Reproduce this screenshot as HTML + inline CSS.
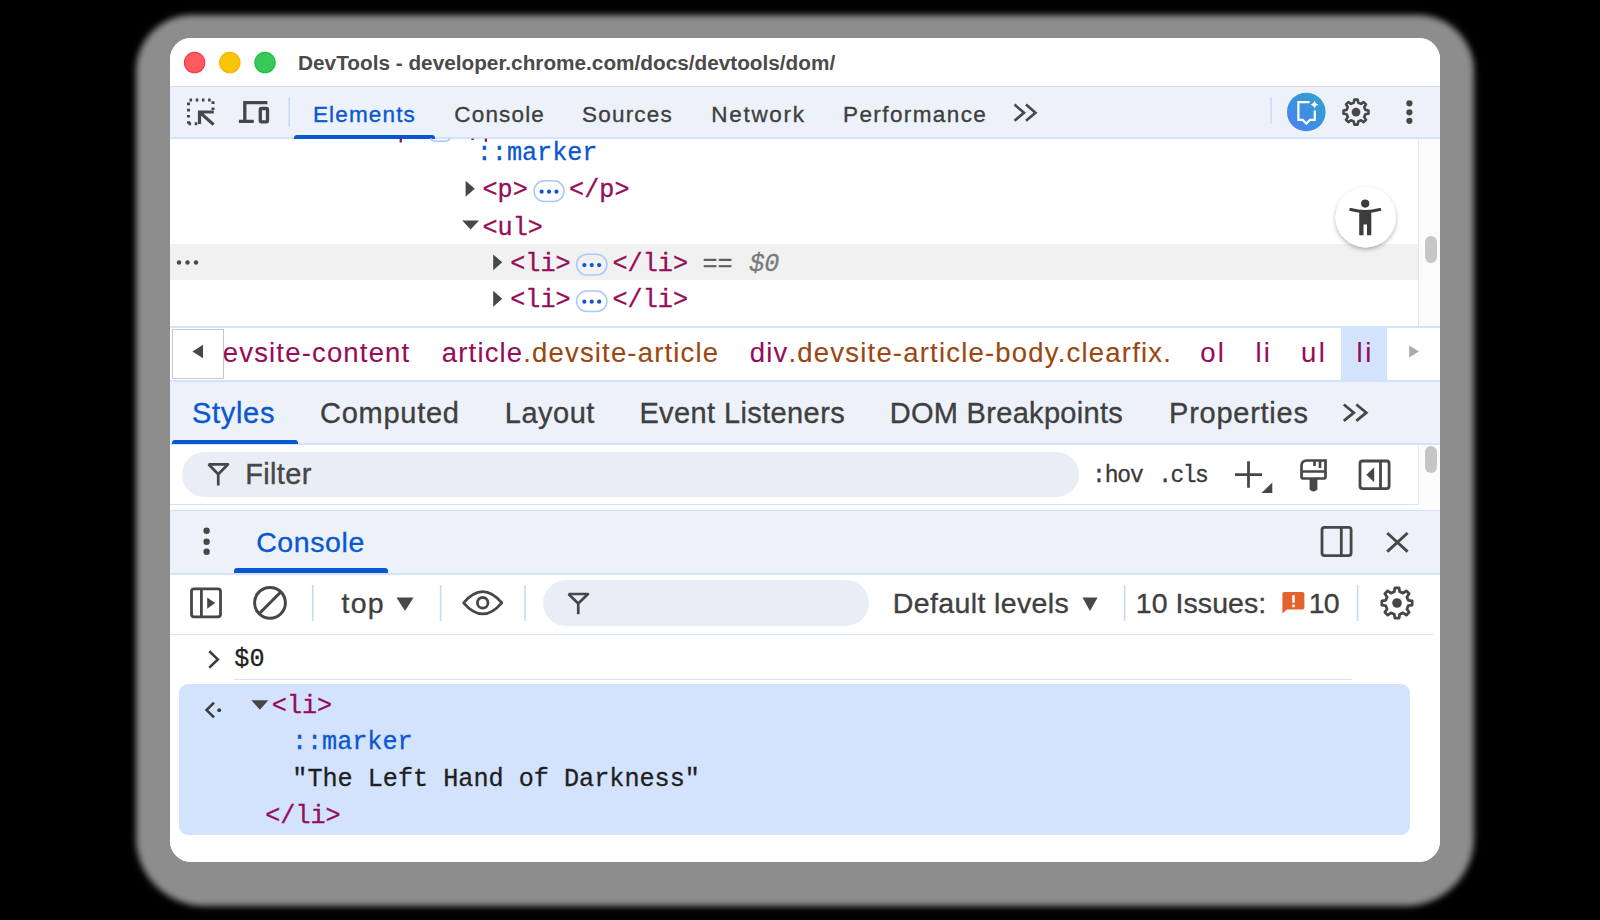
<!DOCTYPE html>
<html><head><meta charset="utf-8"><style>
html,body{margin:0;padding:0;width:1600px;height:920px;overflow:hidden;background:#000}
.t{position:absolute;line-height:0;white-space:pre}
.r{position:absolute}
#shadow{position:absolute;left:136px;top:14.5px;width:1337.5px;height:891px;border-radius:56px 56px 68px 68px;background:#8d8d8d;filter:blur(3px)}
#win{position:absolute;left:170px;top:38px;width:1270px;height:823.5px;border-radius:21px;overflow:hidden;background:#fff}
#ov{position:absolute;left:0;top:0}
</style></head><body>
<div id="shadow"></div>
<div id="win">
<div class="r" style="left:0.00px;top:0.00px;width:1270.00px;height:48.00px;background:#ffffff;"></div>
<div class="r" style="left:0.00px;top:47.50px;width:1270.00px;height:1.00px;background:#dcdcdc;"></div>
<div class="t" style="left:128.10px;top:25.14px;font-family:'Liberation Sans', sans-serif;font-size:20.75px;font-weight:700;font-style:normal;color:#4a4a4a;letter-spacing:0.003px;-webkit-text-stroke:0px;">DevTools - developer.chrome.com/docs/devtools/dom/</div>
<div class="r" style="left:0.00px;top:48.50px;width:1270.00px;height:50.50px;background:#edf2fa;"></div>
<div class="r" style="left:0.00px;top:99.00px;width:1270.00px;height:1.50px;background:#d3e3fd;"></div>
<div class="t" style="left:142.95px;top:76.62px;font-family:'Liberation Sans', sans-serif;font-size:22.5px;font-weight:400;font-style:normal;color:#0b57d0;letter-spacing:1.150px;-webkit-text-stroke:0.35px;">Elements</div>
<div class="t" style="left:284.35px;top:76.72px;font-family:'Liberation Sans', sans-serif;font-size:22.5px;font-weight:400;font-style:normal;color:#3f3f3f;letter-spacing:1.158px;-webkit-text-stroke:0.35px;">Console</div>
<div class="t" style="left:412.00px;top:76.72px;font-family:'Liberation Sans', sans-serif;font-size:22.5px;font-weight:400;font-style:normal;color:#3f3f3f;letter-spacing:1.208px;-webkit-text-stroke:0.35px;">Sources</div>
<div class="t" style="left:541.35px;top:76.72px;font-family:'Liberation Sans', sans-serif;font-size:22.5px;font-weight:400;font-style:normal;color:#3f3f3f;letter-spacing:1.675px;-webkit-text-stroke:0.35px;">Network</div>
<div class="t" style="left:673.05px;top:76.72px;font-family:'Liberation Sans', sans-serif;font-size:22.5px;font-weight:400;font-style:normal;color:#3f3f3f;letter-spacing:1.400px;-webkit-text-stroke:0.35px;">Performance</div>
<div class="r" style="left:124.00px;top:96.50px;width:141.00px;height:4.00px;background:#0b57d0;border-radius:3px 3px 0 0"></div>
<div class="r" style="left:0.00px;top:100.50px;width:1248.00px;height:187.50px;background:#ffffff;"></div>
<div class="r" style="left:0.00px;top:206.00px;width:1248.00px;height:36.00px;background:#f1f1f1;"></div>
<div class="t" style="left:306.70px;top:116.16px;font-family:'Liberation Mono', monospace;font-size:25.17px;font-weight:400;font-style:normal;color:#0b57d0;letter-spacing:0.000px;-webkit-text-stroke:0.3px;">::marker</div>
<div class="t" style="left:312.50px;top:153.16px;font-family:'Liberation Mono', monospace;font-size:25.17px;font-weight:400;font-style:normal;color:#960c58;letter-spacing:0.000px;-webkit-text-stroke:0.3px;">&lt;p&gt;</div>
<div class="t" style="left:399.10px;top:153.16px;font-family:'Liberation Mono', monospace;font-size:25.17px;font-weight:400;font-style:normal;color:#960c58;letter-spacing:0.000px;-webkit-text-stroke:0.3px;">&lt;/p&gt;</div>
<div class="t" style="left:312.50px;top:190.66px;font-family:'Liberation Mono', monospace;font-size:25.17px;font-weight:400;font-style:normal;color:#960c58;letter-spacing:0.000px;-webkit-text-stroke:0.3px;">&lt;ul&gt;</div>
<div class="t" style="left:340.25px;top:227.16px;font-family:'Liberation Mono', monospace;font-size:25.17px;font-weight:400;font-style:normal;color:#960c58;letter-spacing:0.000px;-webkit-text-stroke:0.3px;">&lt;li&gt;</div>
<div class="t" style="left:442.50px;top:227.16px;font-family:'Liberation Mono', monospace;font-size:25.17px;font-weight:400;font-style:normal;color:#960c58;letter-spacing:0.000px;-webkit-text-stroke:0.3px;">&lt;/li&gt;</div>
<div class="t" style="left:532.50px;top:227.16px;font-family:'Liberation Mono', monospace;font-size:25.17px;font-weight:400;font-style:normal;color:#5e5e5e;letter-spacing:0.000px;-webkit-text-stroke:0.3px;">==</div>
<div class="t" style="left:579.25px;top:227.16px;font-family:'Liberation Mono', monospace;font-size:25.17px;font-weight:400;font-style:italic;color:#7a7a7a;letter-spacing:0.000px;-webkit-text-stroke:0.3px;">$0</div>
<div class="t" style="left:340.25px;top:263.46px;font-family:'Liberation Mono', monospace;font-size:25.17px;font-weight:400;font-style:normal;color:#960c58;letter-spacing:0.000px;-webkit-text-stroke:0.3px;">&lt;li&gt;</div>
<div class="t" style="left:442.50px;top:263.46px;font-family:'Liberation Mono', monospace;font-size:25.17px;font-weight:400;font-style:normal;color:#960c58;letter-spacing:0.000px;-webkit-text-stroke:0.3px;">&lt;/li&gt;</div>
<div class="r" style="left:1248.00px;top:100.50px;width:22.00px;height:187.50px;background:#fbfbfb;border-left:1px solid #e6e6e6"></div>
<div class="r" style="left:1255.30px;top:198.20px;width:11.50px;height:26.90px;background:#c6c6c6;border-radius:6px"></div>
<div class="r" style="left:0.00px;top:288.00px;width:1270.00px;height:1.50px;background:#d3e3fd;"></div>
<div class="r" style="left:0.00px;top:289.50px;width:1270.00px;height:52.50px;background:#ffffff;"></div>
<div class="r" style="left:0.00px;top:342.00px;width:1270.00px;height:1.50px;background:#d3e3fd;"></div>
<div class="r" style="left:1170.80px;top:289.50px;width:46.10px;height:52.50px;background:#d3e3fd;"></div>
<div class="t" style="left:52.75px;top:314.88px;font-family:'Liberation Sans', sans-serif;font-size:27.5px;font-weight:400;font-style:normal;color:#960c58;letter-spacing:1.173px;-webkit-text-stroke:0.1px;">evsite-content</div>
<div class="t" style="left:271.85px;top:314.88px;font-family:'Liberation Sans', sans-serif;font-size:27.5px;font-weight:400;font-style:normal;color:#960c58;letter-spacing:1.159px;-webkit-text-stroke:0.1px;">article</div>
<div class="t" style="left:353.32px;top:314.88px;font-family:'Liberation Sans', sans-serif;font-size:27.5px;font-weight:400;font-style:normal;color:#9c4611;letter-spacing:1.159px;-webkit-text-stroke:0.1px;">.devsite-article</div>
<div class="t" style="left:579.75px;top:314.88px;font-family:'Liberation Sans', sans-serif;font-size:27.5px;font-weight:400;font-style:normal;color:#960c58;letter-spacing:1.200px;-webkit-text-stroke:0.1px;">div</div>
<div class="t" style="left:618.50px;top:314.88px;font-family:'Liberation Sans', sans-serif;font-size:27.5px;font-weight:400;font-style:normal;color:#9c4611;letter-spacing:1.200px;-webkit-text-stroke:0.1px;">.devsite-article-body.clearfix.</div>
<div class="t" style="left:1030.35px;top:314.88px;font-family:'Liberation Sans', sans-serif;font-size:27.5px;font-weight:400;font-style:normal;color:#960c58;letter-spacing:2.050px;-webkit-text-stroke:0.1px;">ol</div>
<div class="t" style="left:1085.55px;top:314.88px;font-family:'Liberation Sans', sans-serif;font-size:27.5px;font-weight:400;font-style:normal;color:#960c58;letter-spacing:2.200px;-webkit-text-stroke:0.1px;">li</div>
<div class="t" style="left:1130.95px;top:314.88px;font-family:'Liberation Sans', sans-serif;font-size:27.5px;font-weight:400;font-style:normal;color:#960c58;letter-spacing:2.550px;-webkit-text-stroke:0.1px;">ul</div>
<div class="t" style="left:1186.55px;top:314.88px;font-family:'Liberation Sans', sans-serif;font-size:27.5px;font-weight:400;font-style:normal;color:#960c58;letter-spacing:2.600px;-webkit-text-stroke:0.1px;">li</div>
<div class="r" style="left:1.50px;top:290.50px;width:52.90px;height:50.50px;background:#ffffff;border:1px solid #c9c9c9;box-sizing:border-box"></div>
<div class="r" style="left:1217.80px;top:289.50px;width:52.20px;height:52.50px;background:#ffffff;"></div>
<div class="r" style="left:0.00px;top:343.50px;width:1270.00px;height:61.50px;background:#edf2fa;"></div>
<div class="r" style="left:0.00px;top:405.00px;width:1270.00px;height:1.50px;background:#d3e3fd;"></div>
<div class="t" style="left:21.95px;top:375.15px;font-family:'Liberation Sans', sans-serif;font-size:29px;font-weight:400;font-style:normal;color:#0b57d0;letter-spacing:0.710px;-webkit-text-stroke:0.35px;">Styles</div>
<div class="t" style="left:150.10px;top:375.15px;font-family:'Liberation Sans', sans-serif;font-size:29px;font-weight:400;font-style:normal;color:#3f3f3f;letter-spacing:0.729px;-webkit-text-stroke:0.35px;">Computed</div>
<div class="t" style="left:334.80px;top:375.15px;font-family:'Liberation Sans', sans-serif;font-size:29px;font-weight:400;font-style:normal;color:#3f3f3f;letter-spacing:0.490px;-webkit-text-stroke:0.35px;">Layout</div>
<div class="t" style="left:469.40px;top:375.15px;font-family:'Liberation Sans', sans-serif;font-size:29px;font-weight:400;font-style:normal;color:#3f3f3f;letter-spacing:0.386px;-webkit-text-stroke:0.35px;">Event Listeners</div>
<div class="t" style="left:719.70px;top:375.15px;font-family:'Liberation Sans', sans-serif;font-size:29px;font-weight:400;font-style:normal;color:#3f3f3f;letter-spacing:0.304px;-webkit-text-stroke:0.35px;">DOM Breakpoints</div>
<div class="t" style="left:999.10px;top:375.15px;font-family:'Liberation Sans', sans-serif;font-size:29px;font-weight:400;font-style:normal;color:#3f3f3f;letter-spacing:0.739px;-webkit-text-stroke:0.35px;">Properties</div>
<div class="r" style="left:2.00px;top:401.80px;width:125.50px;height:4.20px;background:#0b57d0;border-radius:3px 3px 0 0"></div>
<div class="r" style="left:0.00px;top:406.50px;width:1248.00px;height:59.50px;background:#ffffff;"></div>
<div class="r" style="left:1248.00px;top:406.50px;width:22.00px;height:65.50px;background:#fbfbfb;border-left:1px solid #e6e6e6"></div>
<div class="r" style="left:1255.40px;top:408.00px;width:11.30px;height:26.50px;background:#c6c6c6;border-radius:6px"></div>
<div class="r" style="left:11.70px;top:413.60px;width:897.80px;height:45.70px;background:#e9eef6;border-radius:23px"></div>
<div class="t" style="left:75.20px;top:436.15px;font-family:'Liberation Sans', sans-serif;font-size:29px;font-weight:400;font-style:normal;color:#474747;letter-spacing:0.360px;-webkit-text-stroke:0.35px;">Filter</div>
<div class="t" style="left:922.00px;top:438.32px;font-family:'Liberation Mono', monospace;font-size:23px;font-weight:400;font-style:normal;color:#3a3a3a;letter-spacing:-1.167px;-webkit-text-stroke:0.3px;">:hov</div>
<div class="t" style="left:988.20px;top:438.32px;font-family:'Liberation Mono', monospace;font-size:23px;font-weight:400;font-style:normal;color:#3a3a3a;letter-spacing:-1.567px;-webkit-text-stroke:0.3px;">.cls</div>
<div class="r" style="left:0.00px;top:465.50px;width:1248.00px;height:1.50px;background:#d3e3fd;"></div>
<div class="r" style="left:0.00px;top:467.00px;width:1270.00px;height:5.00px;background:#ffffff;"></div>
<div class="r" style="left:0.00px;top:471.50px;width:1270.00px;height:1.50px;background:#d3e3fd;"></div>
<div class="r" style="left:0.00px;top:473.00px;width:1270.00px;height:62.00px;background:#edf2fa;"></div>
<div class="r" style="left:0.00px;top:535.00px;width:1270.00px;height:1.50px;background:#d3e3fd;"></div>
<div class="t" style="left:86.20px;top:504.23px;font-family:'Liberation Sans', sans-serif;font-size:28.5px;font-weight:400;font-style:normal;color:#0b57d0;letter-spacing:0.592px;-webkit-text-stroke:0.35px;">Console</div>
<div class="r" style="left:64.00px;top:530.30px;width:153.80px;height:5.20px;background:#0b57d0;border-radius:3px 3px 0 0"></div>
<div class="r" style="left:0.00px;top:536.50px;width:1270.00px;height:59.50px;background:#ffffff;"></div>
<div class="r" style="left:0.00px;top:595.50px;width:1264.00px;height:1.50px;background:#d3e3fd;"></div>
<div class="t" style="left:171.50px;top:565.02px;font-family:'Liberation Sans', sans-serif;font-size:28.5px;font-weight:400;font-style:normal;color:#3f3f3f;letter-spacing:1.250px;-webkit-text-stroke:0.35px;">top</div>
<div class="r" style="left:372.60px;top:541.50px;width:326.10px;height:46.50px;background:#e9eef6;border-radius:23px"></div>
<div class="t" style="left:722.85px;top:565.32px;font-family:'Liberation Sans', sans-serif;font-size:28.5px;font-weight:400;font-style:normal;color:#3f3f3f;letter-spacing:0.365px;-webkit-text-stroke:0.35px;">Default levels</div>
<div class="t" style="left:965.75px;top:565.02px;font-family:'Liberation Sans', sans-serif;font-size:28.5px;font-weight:400;font-style:normal;color:#3f3f3f;letter-spacing:0.067px;-webkit-text-stroke:0.35px;">10 Issues:</div>
<div class="t" style="left:1138.75px;top:565.02px;font-family:'Liberation Sans', sans-serif;font-size:28.5px;font-weight:400;font-style:normal;color:#3f3f3f;letter-spacing:-0.850px;-webkit-text-stroke:0.35px;">10</div>
<div class="r" style="left:0.00px;top:597.00px;width:1270.00px;height:226.00px;background:#ffffff;"></div>
<div class="t" style="left:64.35px;top:622.16px;font-family:'Liberation Mono', monospace;font-size:25.17px;font-weight:400;font-style:normal;color:#1f1f1f;letter-spacing:0.000px;-webkit-text-stroke:0.3px;">$0</div>
<div class="r" style="left:63.80px;top:640.50px;width:1117.90px;height:1.50px;background:#d3e3fd;"></div>
<div class="r" style="left:8.75px;top:645.75px;width:1230.75px;height:150.95px;background:#d3e3fd;border-radius:9px"></div>
<div class="t" style="left:101.80px;top:668.56px;font-family:'Liberation Mono', monospace;font-size:25.17px;font-weight:400;font-style:normal;color:#960c58;letter-spacing:0.000px;-webkit-text-stroke:0.3px;">&lt;li&gt;</div>
<div class="t" style="left:121.90px;top:704.86px;font-family:'Liberation Mono', monospace;font-size:25.17px;font-weight:400;font-style:normal;color:#0b57d0;letter-spacing:0.000px;-webkit-text-stroke:0.3px;">::marker</div>
<div class="t" style="left:122.30px;top:742.41px;font-family:'Liberation Mono', monospace;font-size:25.17px;font-weight:400;font-style:normal;color:#1f1f1f;letter-spacing:0.000px;-webkit-text-stroke:0.3px;">&quot;The Left Hand of Darkness&quot;</div>
<div class="t" style="left:95.20px;top:778.66px;font-family:'Liberation Mono', monospace;font-size:25.17px;font-weight:400;font-style:normal;color:#960c58;letter-spacing:0.000px;-webkit-text-stroke:0.3px;">&lt;/li&gt;</div>
</div>
<svg id="ov" width="1600" height="920" viewBox="0 0 1600 920">
<circle cx="194.6" cy="62.6" r="10.15" fill="#ff5a5f" stroke="#f23a45" stroke-width="1.2"/>
<circle cx="229.8" cy="62.6" r="10.15" fill="#f9c403" stroke="#f3b700" stroke-width="1.2"/>
<circle cx="265.0" cy="62.6" r="10.15" fill="#38c95a" stroke="#18c13a" stroke-width="1.2"/>
<g stroke="#474747" stroke-width="3" fill="none" stroke-linecap="butt"><path d="M188.5 123.8 V100 H213 V111" stroke-dasharray="2.6 3.6"/><path d="M188.5 123.8 H198" stroke-dasharray="2.6 3.6"/><path d="M199.5 124 V112 H213.8 M200.5 113 L213.6 124.6" stroke-width="3.2"/></g>
<g stroke="#474747" stroke-width="3.3" fill="none"><path d="M267.4 102.6 H244.8 V121.4 M238.9 121.4 H253.8"/><rect x="260.3" y="108.5" width="7.2" height="13.3" rx="1.2"/></g>
<line x1="289.2" y1="97.2" x2="289.2" y2="126.9" stroke="#c8d9f7" stroke-width="1.5"/>
<line x1="1271" y1="97.3" x2="1271" y2="123.5" stroke="#c8d9f7" stroke-width="1.5"/>
<path d="M1014.5 104.6 L1024.0 112.65 L1014.5 120.7 M1026.0 104.6 L1035.5 112.65 L1026.0 120.7" stroke="#474747" stroke-width="2.6" fill="none"/>
<path d="M1343.8 404.5 L1353.8 412.65 L1343.8 420.8 M1356.3 404.5 L1366.3 412.65 L1356.3 420.8" stroke="#474747" stroke-width="2.8" fill="none"/>
<defs><linearGradient id="ai" x1="0" y1="1" x2="1" y2="0"><stop offset="0" stop-color="#4a7ff5"/><stop offset="1" stop-color="#2fa3c8"/></linearGradient><filter id="sh" x="-30%" y="-30%" width="160%" height="170%"><feDropShadow dx="0" dy="2" stdDeviation="2.2" flood-color="#000" flood-opacity="0.3"/></filter></defs>
<circle cx="1306.3" cy="112" r="19.3" fill="url(#ai)"/>
<path d="M1309.5 102.2 H1298.4 V119.8 H1302.6 L1306.3 123.6 L1310 119.8 H1314.8 V110.5" stroke="#fff" stroke-width="2.2" fill="none" stroke-linejoin="miter"/>
<path d="M1314.5 100.6 Q1315.2 104.1 1318.6 104.7 Q1315.2 105.3 1314.5 108.8 Q1313.8 105.3 1310.4 104.7 Q1313.8 104.1 1314.5 100.6Z" fill="#fff"/>
<path d="M1365.33 109.86 L1368.49 110.42 L1368.49 113.78 L1365.33 114.34 L1364.19 117.12 L1366.02 119.74 L1363.64 122.12 L1361.02 120.29 L1358.24 121.43 L1357.68 124.59 L1354.32 124.59 L1353.76 121.43 L1350.98 120.29 L1348.36 122.12 L1345.98 119.74 L1347.81 117.12 L1346.67 114.34 L1343.51 113.78 L1343.51 110.42 L1346.67 109.86 L1347.81 107.08 L1345.98 104.46 L1348.36 102.08 L1350.98 103.91 L1353.76 102.77 L1354.32 99.61 L1357.68 99.61 L1358.24 102.77 L1361.02 103.91 L1363.64 102.08 L1366.02 104.46 L1364.19 107.08Z" stroke="#474747" stroke-width="2.6" fill="none" stroke-linejoin="round"/><circle cx="1356" cy="112.1" r="4.4" fill="#474747"/>
<path d="M1408.28 600.29 L1412.16 600.96 L1412.16 605.04 L1408.28 605.71 L1406.89 609.06 L1409.16 612.28 L1406.28 615.16 L1403.06 612.89 L1399.71 614.28 L1399.04 618.16 L1394.96 618.16 L1394.29 614.28 L1390.94 612.89 L1387.72 615.16 L1384.84 612.28 L1387.11 609.06 L1385.72 605.71 L1381.84 605.04 L1381.84 600.96 L1385.72 600.29 L1387.11 596.94 L1384.84 593.72 L1387.72 590.84 L1390.94 593.11 L1394.29 591.72 L1394.96 587.84 L1399.04 587.84 L1399.71 591.72 L1403.06 593.11 L1406.28 590.84 L1409.16 593.72 L1406.89 596.94Z" stroke="#474747" stroke-width="2.8" fill="none" stroke-linejoin="round"/><circle cx="1397" cy="603" r="4.8" fill="#474747"/>
<circle cx="1409.4" cy="103.3" r="3.1" fill="#474747"/>
<circle cx="1409.4" cy="112.3" r="3.1" fill="#474747"/>
<circle cx="1409.4" cy="120.8" r="3.1" fill="#474747"/>
<path d="M465.6 180.8 L474.8 188.8 L465.6 196.8Z" fill="#474747"/>
<path d="M462.2 220.6 L479 220.6 L470.6 229.6Z" fill="#474747"/>
<path d="M493.2 254.4 L502.2 262.3 L493.2 270.2Z" fill="#474747"/>
<path d="M493.2 290.8 L502.2 298.8 L493.2 306.8Z" fill="#474747"/>
<rect x="534.05" y="180.85" width="30.0" height="20.700000000000017" rx="10.350000000000009" fill="#fff" fill-opacity="0.0" stroke="#a8c7fa" stroke-width="1.5"/><circle cx="541.65" cy="191.7" r="2.1" fill="#0b57d0"/><circle cx="549.05" cy="191.7" r="2.1" fill="#0b57d0"/><circle cx="556.4499999999999" cy="191.7" r="2.1" fill="#0b57d0"/>
<rect x="576.55" y="254.25" width="30.40000000000009" height="20.69999999999999" rx="10.349999999999994" fill="#fff" fill-opacity="0.0" stroke="#a8c7fa" stroke-width="1.5"/><circle cx="584.35" cy="265.1" r="2.1" fill="#0b57d0"/><circle cx="591.75" cy="265.1" r="2.1" fill="#0b57d0"/><circle cx="599.15" cy="265.1" r="2.1" fill="#0b57d0"/>
<rect x="576.55" y="290.95" width="30.40000000000009" height="20.5" rx="10.25" fill="#fff" fill-opacity="0.0" stroke="#a8c7fa" stroke-width="1.5"/><circle cx="584.35" cy="301.7" r="2.1" fill="#0b57d0"/><circle cx="591.75" cy="301.7" r="2.1" fill="#0b57d0"/><circle cx="599.15" cy="301.7" r="2.1" fill="#0b57d0"/>
<rect x="399.6" y="138.6" width="2.3" height="3.9" fill="#960c58"/>
<rect x="471.3" y="138.6" width="2.6" height="1.3" fill="#960c58"/>
<rect x="484.8" y="138.6" width="2.2" height="3.2" fill="#960c58"/>
<path d="M430.5 138.4 Q432 141.3 436 141.3 H444.5 Q448.5 141.3 450 138.4" stroke="#a8c7fa" stroke-width="1.4" fill="none"/>
<circle cx="179" cy="262.5" r="2.2" fill="#474747"/>
<circle cx="187.5" cy="262.5" r="2.2" fill="#474747"/>
<circle cx="196" cy="262.5" r="2.2" fill="#474747"/>
<circle cx="1365.7" cy="217.2" r="30.2" fill="#fff" filter="url(#sh)"/>
<circle cx="1365.2" cy="203.6" r="4.1" fill="#3c3c3c"/>
<path d="M1350.8 209.6 Q1365.3 213.4 1379.8 209.6" stroke="#3c3c3c" stroke-width="3.1" fill="none" stroke-linecap="round"/>
<path d="M1359.2 211.5 H1371.3 V235.3 H1367 V224.5 H1363.5 V235.3 H1359.2Z" fill="#3c3c3c"/>
<path d="M203 344.8 L192.5 351.5 L203 358.2Z" fill="#474747"/>
<path d="M1409.2 345.4 L1419 351.5 L1409.2 357.6Z" fill="#ababab"/>
<path d="M208.5 464.3 H228 L218.25 474.3 V485.6" stroke="#474747" stroke-width="2.7" fill="none" stroke-linejoin="round"/><path d="M208.5 464.3 L218.25 474.3" stroke="#474747" stroke-width="2.7" fill="none"/>
<path d="M568.5 594.0 H588 L578.25 603.5 V614.3" stroke="#474747" stroke-width="2.7" fill="none" stroke-linejoin="round"/><path d="M568.5 594.0 L578.25 603.5" stroke="#474747" stroke-width="2.7" fill="none"/>
<path d="M1235 474.6 H1262 M1248.5 461.2 V487.8" stroke="#474747" stroke-width="2.8" fill="none"/>
<path d="M1261.5 493 H1272.3 V482.4Z" fill="#474747"/>
<path d="M1301.5 466 Q1301.5 460.5 1307 460.5 H1325.5 V476.5 Q1325.5 478.5 1323.5 478.5 H1303.5 Q1301.5 478.5 1301.5 476.5Z M1301.5 471.5 H1325.5 M1314.5 460.5 V466 M1320 460.5 V468" stroke="#474747" stroke-width="2.7" fill="none"/>
<path d="M1309.6 478 H1317.4 V489.5 Q1313.5 493.5 1309.6 489.5Z" fill="#474747"/>
<rect x="1360" y="461" width="29.1" height="27.6" rx="2.5" stroke="#474747" stroke-width="2.8" fill="none"/>
<path d="M1380.5 461 V488.6" stroke="#474747" stroke-width="2.8"/>
<path d="M1374.2 467.3 L1366.3 474.8 L1374.2 482.3Z" fill="#474747"/>
<circle cx="206.6" cy="530.8" r="3.2" fill="#474747"/>
<circle cx="206.6" cy="541.7" r="3.2" fill="#474747"/>
<circle cx="206.6" cy="551.8" r="3.2" fill="#474747"/>
<rect x="1322" y="527.4" width="29.1" height="28.2" rx="2.5" stroke="#474747" stroke-width="2.8" fill="none"/>
<path d="M1341.3 527.4 V555.6" stroke="#474747" stroke-width="2.8"/>
<path d="M1387.2 533 L1407.6 551.6 M1407.6 533 L1387.2 551.6" stroke="#474747" stroke-width="2.9"/>
<rect x="191.5" y="588.8" width="29" height="28" rx="2.5" stroke="#474747" stroke-width="2.8" fill="none"/>
<path d="M201.4 588.8 V616.8" stroke="#474747" stroke-width="2.8"/>
<path d="M207.2 597.4 L215.2 603 L207.2 608.8Z" fill="#474747"/>
<circle cx="270" cy="602.8" r="15.4" stroke="#474747" stroke-width="3" fill="none"/>
<path d="M280.9 591.9 L259.1 613.7" stroke="#474747" stroke-width="3"/>
<line x1="312.8" y1="585" x2="312.8" y2="621" stroke="#c8d9f7" stroke-width="1.6"/>
<line x1="440.6" y1="585" x2="440.6" y2="621" stroke="#c8d9f7" stroke-width="1.6"/>
<line x1="525" y1="585" x2="525" y2="621" stroke="#c8d9f7" stroke-width="1.6"/>
<line x1="1124.6" y1="585" x2="1124.6" y2="621" stroke="#c8d9f7" stroke-width="1.6"/>
<line x1="1357.6" y1="585" x2="1357.6" y2="621" stroke="#c8d9f7" stroke-width="1.6"/>
<path d="M396.5 597.6 H413.6 L405 611Z" fill="#474747"/>
<path d="M1082.5 597.6 H1097.6 L1090 611Z" fill="#474747"/>
<path d="M463.6 602.8 Q482.7 580.5 501.8 602.8 Q482.7 625.1 463.6 602.8Z" stroke="#474747" stroke-width="2.8" fill="none" stroke-linejoin="round"/>
<circle cx="482.7" cy="602.8" r="5.3" stroke="#474747" stroke-width="2.8" fill="none"/>
<path d="M1284.4 592 H1302.4 Q1304.4 592 1304.4 594 V607.5 Q1304.4 609.5 1302.4 609.5 H1287 L1282.4 613.5 V594 Q1282.4 592 1284.4 592Z" fill="#e4622c"/>
<rect x="1292.2" y="595.2" width="2.6" height="7.6" fill="#fff"/><rect x="1292.2" y="604.6" width="2.6" height="2.6" fill="#fff"/>
<path d="M209.3 651.2 L217.8 659.4 L209.3 667.6" stroke="#3c3c3c" stroke-width="2.6" fill="none"/>
<path d="M214 702.6 L206.5 710 L214 717.4" stroke="#3c3c3c" stroke-width="2.5" fill="none"/>
<circle cx="219.2" cy="710.2" r="1.9" fill="#3c3c3c"/>
<path d="M251.4 700.2 H268.4 L259.9 709.8Z" fill="#474747"/>
</svg>
</body></html>
